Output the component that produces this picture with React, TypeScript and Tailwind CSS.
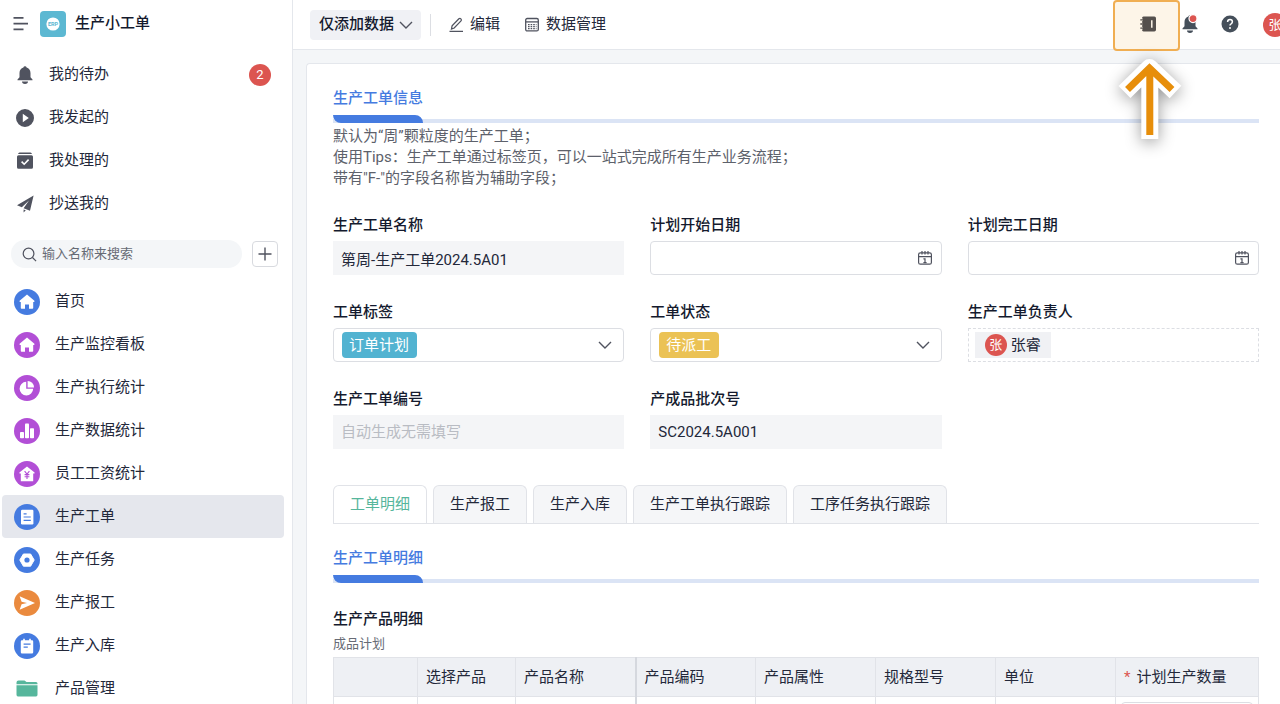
import type { ReactNode } from 'react';

const chevron = (
  <svg viewBox="0 0 16 16" className="h-4 w-4 shrink-0" fill="none" stroke="#50535f" strokeWidth="1.4">
    <path d="M2 5l6 6 6-6" />
  </svg>
);

const house = <path d="M13 5.4 L20.4 11.8 Q20.8 13 19.800 13 H19.200 V19 Q19.200 19.800 18.400 19.800 H15 V15.400 H11 V19.800 H7.600 Q6.800 19.800 6.800 19 V13 H6.200 Q5.200 13 5.600 11.800 Z" />;

const navItems: { label: string; color?: string; icon?: ReactNode; active?: boolean }[] = [
  { label: '首页', color: '#457be0', icon: house },
  { label: '生产监控看板', color: '#b24fd6', icon: house },
  {
    label: '生产执行统计',
    color: '#b24fd6',
    icon: (
      <>
        <path d="M12.2 6.800a6.800 6.800 0 1 0 7 7h-7z" />
        <path d="M13.600 6v6.400h6.400a6.400 6.400 0 0 0-6.400-6.400z" />
      </>
    ),
  },
  {
    label: '生产数据统计',
    color: '#b24fd6',
    icon: (
      <>
        <rect x="6" y="14" width="4" height="6.3" rx=".8" />
        <rect x="11" y="5.5" width="4" height="14.8" rx=".8" />
        <rect x="16" y="10.2" width="4" height="10.1" rx=".8" />
      </>
    ),
  },
  {
    label: '员工工资统计',
    color: '#b24fd6',
    icon: (
      <>
        <path d="M13 5.400 L20.600 11.400 Q20.800 12.600 19.800 12.600 H19.200 V20.200 H6.800 V12.600 H6.200 Q5.200 12.600 5.400 11.400 Z" />
        <path d="M10.6 10.200l2.400 3 2.400-3M13 13.200v4.800M10.600 13.600h4.800M10.600 15.800h4.800" fill="none" stroke="#b24fd6" strokeWidth="1.100" />
      </>
    ),
  },
  {
    label: '生产工单',
    color: '#457be0',
    active: true,
    icon: (
      <>
        <rect x="7" y="5.800" width="12.400" height="14.600" rx="1.200" />
        <path d="M9.600 9.800h3M9.600 13h7.200M9.600 16.400h7.200" stroke="#457be0" strokeWidth="1.200" />
      </>
    ),
  },
  {
    label: '生产任务',
    color: '#457be0',
    icon: (
      <>
        <path d="M9.400 7h7.200L20.200 13l-3.600 6.200H9.400L5.800 13z" stroke="#fff" strokeWidth="1" strokeLinejoin="round" />
        <circle cx="13" cy="13" r="2.600" fill="#457be0" />
      </>
    ),
  },
  {
    label: '生产报工',
    color: '#ea8a3e',
    icon: <path d="M5.600 6.200L21 13 5.600 19.800l2-5.500 5.400-1.300-5.400-1.300z" />,
  },
  {
    label: '生产入库',
    color: '#457be0',
    icon: (
      <>
        <path d="M8 7.200h1.200V5.800h1.600v1.400h4.400V5.800h1.600v1.400H18q1.200 0 1.200 1.200v10.800q0 1.200-1.200 1.200H8q-1.200 0-1.200-1.200V8.400Q6.800 7.200 8 7.200z" />
        <path d="M9.600 11.200h7M9.600 14.200h4.200" stroke="#457be0" strokeWidth="1.200" />
      </>
    ),
  },
  { label: '产品管理' },
];

const bell = <path d="M10 1.200a1.700 1.700 0 0 1 1.600 1.300C14 3.200 15.500 5.300 15.500 8v4.200l2 2.300v.8h-15v-.8l2-2.300V8c0-2.700 1.500-4.800 3.900-5.500A1.700 1.700 0 0 1 10 1.200zM7 16.600h6a3 2.400 0 0 1-6 0z" />;

const todoItems: { label: string; icon: ReactNode; badge?: number }[] = [
  { label: '我的待办', badge: 2, icon: bell },
  {
    label: '我发起的',
    icon: <path fillRule="evenodd" d="M10 1a9 9 0 1 1 0 18 9 9 0 0 1 0-18zM7.800 5.800v8.400l6-4.200z" />,
  },
  {
    label: '我处理的',
    icon: (
      <>
        <path d="M4.500 1.600h11q1 0 1.500 1.500H3Q3.500 1.600 4.500 1.600zM3.500 4.300h13q1.500 0 1.500 1.500v10.400q0 1.500-1.500 1.500h-13Q2 17.700 2 16.200V5.800q0-1.500 1.500-1.500z" />
        <path d="M6.600 10.600l2.600 2.600 4.400-4.600" fill="none" stroke="#fff" strokeWidth="1.600" />
      </>
    ),
  },
  {
    label: '抄送我的',
    icon: <path d="M18.600 1.600L2 11.200l4.800 2L14 6.600l-5.400 7.600 6.400 2.600zM8.600 15.400v3.200l2.200-2.300z" />,
  },
];

const tabs = ['工单明细', '生产报工', '生产入库', '生产工单执行跟踪', '工序任务执行跟踪'];

const columns = ['', '选择产品', '产品名称', '产品编码', '产品属性', '规格型号', '单位', '计划生产数量'];

function SectionTitle({ children }: { children: ReactNode }) {
  return (
    <div className="border-b-4 border-[#dbe4f5]">
      <h2 className="-mb-1 inline-block align-top text-[15px] leading-6 font-medium text-[#457be0]">
        {children}
        <span className="mt-[5px] block h-2 rounded-tr-lg rounded-bl-lg bg-[#457be0]" />
      </h2>
    </div>
  );
}

function Field({ id, label, children }: { id: string; label: string; children: ReactNode }) {
  return (
    <div>
      <label htmlFor={id} className="mb-1 block leading-6 font-medium text-[#141a2e]">
        {label}
      </label>
      {children}
    </div>
  );
}

function DateInput({ id }: { id: string }) {
  return (
    <div className="flex h-[34px] items-center rounded border border-[#dcdee3] pr-2">
      <input id={id} type="text" className="min-w-0 flex-1 px-2 outline-none" />
      <svg viewBox="0 0 16 16" className="h-4 w-4" fill="none" stroke="#50535f" strokeWidth="1.200">
        <rect x="1.600" y="2.800" width="12.800" height="11.400" rx="1.800" />
        <path d="M1.600 6.700h12.800M5 1v3.600M8 1v3.600M11 1v3.600M6.400 8.800H8v4M6.400 12.600h3.200" />
      </svg>
    </div>
  );
}

function Sidebar() {
  return (
    <aside className="w-[293px] shrink-0 overflow-hidden border-r border-[#e4e7ec] bg-white">
      <div className="flex h-[47px] items-center pl-3">
        <button type="button" aria-label="菜单" className="mr-3">
          <svg viewBox="0 0 16 16" className="h-4 w-4" fill="none" stroke="#50535f" strokeWidth="1.700">
            <path d="M1.500 1.800h10M1.500 7.600h14.500M1.500 13.400h10" />
          </svg>
        </button>
        <svg viewBox="0 0 26 26" className="mr-[9px] h-[26px] w-[26px] rounded bg-[#5cb8d2]">
          <circle cx="13" cy="13" r="6.600" fill="#fff" />
          <text x="13" y="15" textAnchor="middle" fontSize="5.500" fontWeight="700" fill="#5cb8d2">ERP</text>
        </svg>
        <h1 className="font-medium text-[#141a2e]">生产小工单</h1>
      </div>

      <ul className="pt-1.5">
        {todoItems.map((item) => (
          <li key={item.label}>
            <a href="#" className="flex h-[43px] items-center pr-[21px] pl-[15px]">
              <svg viewBox="0 0 20 20" className="mr-3.5 h-5 w-5" fill="#50535f">{item.icon}</svg>
              {item.label}
              {item.badge && (
                <span className="ml-auto flex h-[22px] w-[22px] items-center justify-center rounded-full bg-[#dc5550] text-[13px] text-white">
                  {item.badge}
                </span>
              )}
            </a>
          </li>
        ))}
      </ul>

      <div className="flex items-center justify-between pt-[15px] pr-3.5 pb-3 pl-[11px]">
        <label className="flex h-7 w-[231px] items-center rounded-full bg-[#f4f6f8] px-[11px]">
          <svg viewBox="0 0 16 16" className="mr-[5px] h-[15px] w-[15px]" fill="none" stroke="#50535f" strokeWidth="1.300">
            <circle cx="7" cy="7" r="5.700" />
            <path d="M11.200 11.200L15 15" />
          </svg>
          <input type="search" placeholder="输入名称来搜索" className="min-w-0 flex-1 text-[13px] outline-none placeholder:text-[#676b75]" />
        </label>
        <button type="button" aria-label="新建" className="flex h-[26px] w-[26px] items-center justify-center rounded border border-[#d8dadf]">
          <svg viewBox="0 0 14 14" className="h-3.5 w-3.5" stroke="#50535f" strokeWidth="1.400">
            <path d="M7 .5v13M.5 7h13" />
          </svg>
        </button>
      </div>

      <nav className="pr-2 pl-0.5">
        {navItems.map((item) => (
          <a
            key={item.label}
            href="#"
            className={`flex h-[43px] items-center gap-[15px] rounded pl-3 ${item.active ? 'bg-[#e5e7ed]' : ''}`}
          >
            {item.icon ? (
              <svg viewBox="0 0 26 26" className="h-[26px] w-[26px]" fill="#fff">
                <circle cx="13" cy="13" r="13" fill={item.color} />
                {item.icon}
              </svg>
            ) : (
              <svg viewBox="0 0 26 26" className="h-[26px] w-[26px]" fill="#56b69c">
                <path d="M4.500 4.500h6l2 1.500H22q1.500 0 1.500 1.500v.8h-21V6.500q0-2 2-2zM2.500 9.300h21v9.400q0 1.800-1.500 1.800H4q-1.500 0-1.500-1.800z" />
              </svg>
            )}
            {item.label}
          </a>
        ))}
      </nav>
    </aside>
  );
}

function Header() {
  return (
    <header className="flex h-[50px] shrink-0 items-center border-b border-[#e4e7ec] bg-white pl-[17px]">
      <div className="flex h-[30px] items-center rounded bg-[#f0f1f5] pr-[7px] pl-[9px]">
        <select aria-label="提交权限" className="mr-[3px] appearance-none font-medium text-[#141a2e] outline-none">
          <option>仅添加数据</option>
        </select>
        {chevron}
      </div>
      <span className="mx-[9px] h-[22px] w-px bg-[#dcdee3]" />
      <button type="button" className="ml-2 flex items-center gap-1.5">
        <svg viewBox="0 0 16 16" className="h-4 w-4" fill="none" stroke="#50535f" strokeWidth="1.300">
          <path d="M3.500 12l.6-3.300 6.800-6.900q1-.9 2 .1t.1 2L6.200 11zM1.500 14.300h13.500" />
        </svg>
        编辑
      </button>
      <button type="button" className="ml-6 flex items-center gap-1.5">
        <svg viewBox="0 0 16 16" className="h-4 w-4" fill="none" stroke="#50535f" strokeWidth="1.300">
          <rect x="1.700" y="1.500" width="12.600" height="12.400" rx="1.500" />
          <path d="M1.700 4.900h12.600" />
          <path d="M4 7.600h8.500M4 9.600h8.500M4 11.600h8.500" strokeDasharray="1.600 1" />
        </svg>
        数据管理
      </button>

      <div className="-mr-[7px] ml-auto flex h-full items-center">
        <div className="relative z-10 flex h-[51px] w-[67px] items-center justify-center self-start rounded-sm border-2 border-[#f0ae52] bg-[#fdf5e8]">
          <button type="button" aria-label="通讯录" className="pb-1">
            <svg viewBox="0 0 18 18" className="ml-0.5 h-[18px] w-[18px]" fill="#55504d">
              <path d="M4.500 1.500h10.800q1.700 0 1.700 1.700v11.600q0 1.700-1.700 1.700H4.500Q3 16.500 3 14.800V3.200Q3 1.500 4.500 1.500z" />
              <path d="M1.400 4.900h2.400M1.400 9h2.400M1.400 13.100h2.400" stroke="#fdf5e8" strokeWidth="2.600" />
              <path d="M1.300 4.900h3.200M1.300 9h3.200M1.300 13.100h3.200" stroke="#55504d" strokeWidth="1.400" />
              <path d="M12.800 5.200v7.600" stroke="#fdf5e8" strokeWidth="1.500" />
            </svg>
          </button>
          <svg
            viewBox="0 0 80 100"
            className="absolute top-full -left-[5px] h-[100px] w-20 drop-shadow-[0_3px_8px_rgba(0,0,0,0.4)]"
            fill="none"
          >
            <path d="M14.500 43L39.500 18.500 65.500 43M39.800 19V90" stroke="#fff" strokeWidth="17" strokeLinejoin="round" />
            <path d="M17.500 40.500L39.500 19 62 40.500M39.800 19V86" stroke="#e78e0a" strokeWidth="7" />
          </svg>
        </div>
        <button type="button" aria-label="通知" className="pb-0.5">
          <svg viewBox="0 0 20 20" className="h-5 w-5" fill="#454f5a">
            {bell}
            <circle cx="13" cy="4.600" r="4" fill="#dc5550" stroke="#fff" strokeWidth="1.200" />
          </svg>
        </button>
        <button type="button" aria-label="帮助" className="mr-[23px] ml-5 pb-0.5">
          <svg viewBox="0 0 20 20" className="h-5 w-5">
            <circle cx="10" cy="10" r="8.500" fill="#454f5a" />
            <path d="M7.600 8q0-2.500 2.400-2.500t2.400 2.300q0 1.200-1.300 2-1.100.6-1.100 1.700" fill="none" stroke="#fff" strokeWidth="1.500" />
            <circle cx="10" cy="13.900" r="1" fill="#fff" />
          </svg>
        </button>
        <button type="button" className="h-6 w-6 rounded-full bg-[#dc5550] text-[13px] leading-6 text-white">张</button>
      </div>
    </header>
  );
}

export default function App() {
  return (
    <div className="flex h-screen overflow-hidden font-['Roboto','Noto_Sans_CJK_SC',sans-serif] text-[15px] text-[#23283a]">
      <Sidebar />

      <div className="flex min-w-0 flex-1 flex-col">
        <Header />

        <main className="flex-1 overflow-hidden bg-[#f4f6f8] pt-[13px] pl-[13px]">
          <div className="min-h-full rounded-tl border-t border-l border-[#e4e7ec] bg-white pt-[22px] pr-[21px] pl-[26px]">
            <SectionTitle>生产工单信息</SectionTitle>
            <p className="pt-[3px] leading-[21px] text-[#5d616b]">
              默认为“周”颗粒度的生产工单；
              <br />
              使用Tips：生产工单通过标签页，可以一站式完成所有生产业务流程；
              <br />
              带有"F-"的字段名称皆为辅助字段；
            </p>

            <form className="mt-6 grid grid-cols-3 gap-x-[26px] gap-y-[25px]">
              <Field id="name" label="生产工单名称">
                <input id="name" readOnly value="第周-生产工单2024.5A01" className="h-[34px] w-full bg-[#f4f5f7] px-2 outline-none" />
              </Field>
              <Field id="start" label="计划开始日期">
                <DateInput id="start" />
              </Field>
              <Field id="end" label="计划完工日期">
                <DateInput id="end" />
              </Field>
              <Field id="tag" label="工单标签">
                <div className="flex h-[34px] items-center justify-between rounded border border-[#dcdee3] pr-2.5 pl-2">
                  <select id="tag" className="h-[26px] appearance-none rounded bg-[#52b3d1] px-[7px] text-white outline-none">
                    <option>订单计划</option>
                  </select>
                  {chevron}
                </div>
              </Field>
              <Field id="status" label="工单状态">
                <div className="flex h-[34px] items-center justify-between rounded border border-[#dcdee3] pr-2.5 pl-2">
                  <select id="status" className="h-[26px] appearance-none rounded bg-[#ebc255] px-[7px] text-white outline-none">
                    <option>待派工</option>
                  </select>
                  {chevron}
                </div>
              </Field>
              <Field id="owner" label="生产工单负责人">
                <div className="flex h-[34px] items-center border border-dashed border-[#dcdee3] pl-1.5">
                  <button id="owner" type="button" className="flex h-[26px] items-center gap-1 bg-[#f0f1f4] px-2.5">
                    <span className="h-[22px] w-[22px] rounded-full bg-[#dc5550] text-[13px] leading-[22px] text-white">张</span>
                    张睿
                  </button>
                </div>
              </Field>
              <Field id="code" label="生产工单编号">
                <input id="code" readOnly placeholder="自动生成无需填写" className="h-[34px] w-full bg-[#f4f5f7] px-2 outline-none placeholder:text-[#b9bcc3]" />
              </Field>
              <Field id="batch" label="产成品批次号">
                <input id="batch" readOnly value="SC2024.5A001" className="h-[34px] w-full bg-[#f4f5f7] px-2 outline-none" />
              </Field>
            </form>

            <div role="tablist" className="mt-9 flex gap-1.5 border-b border-[#e1e3e8]">
              {tabs.map((tab, i) => (
                <button
                  key={tab}
                  type="button"
                  role="tab"
                  aria-selected={i === 0}
                  className={`h-[38px] rounded-t-md border border-b-0 border-[#e1e3e8] px-4 ${
                    i === 0 ? '-mb-px bg-white text-[#56b69c]' : 'bg-[#f5f6f8]'
                  }`}
                >
                  {tab}
                </button>
              ))}
            </div>

            <div className="mt-[22px]">
              <SectionTitle>生产工单明细</SectionTitle>
            </div>

            <h3 className="mt-6 leading-6 font-medium text-[#141a2e]">生产产品明细</h3>
            <p className="text-[13px] leading-[26px] text-[#676b75]">成品计划</p>
            <table className="w-full table-fixed border-collapse">
              <colgroup>
                <col className="w-[84px]" />
                <col className="w-[98px]" />
                <col className="w-[120px]" />
                <col className="w-[120px]" />
                <col className="w-[120px]" />
                <col className="w-[120px]" />
                <col className="w-[120px]" />
                <col />
              </colgroup>
              <thead>
                <tr className="h-[39px] bg-[#eef0f4] text-left">
                  {columns.map((column, i) => (
                    <th
                      key={i}
                      className={`border border-[#e1e3e8] px-2 font-normal ${i === 2 ? 'border-r-2 border-r-[#d5d8de]' : ''}`}
                    >
                      {i === 7 && <span className="mr-1.5 text-[#dc5550]">*</span>}
                      {column}
                    </th>
                  ))}
                </tr>
              </thead>
              <tbody>
                <tr className="h-11">
                  {columns.map((column, i) => (
                    <td
                      key={i}
                      className={`border border-[#e1e3e8] p-[5px] ${i === 2 ? 'border-r-2 border-r-[#d5d8de]' : ''}`}
                    >
                      {i === 7 && <input aria-label={column} className="block h-[34px] w-full rounded border border-[#dcdee3]" />}
                    </td>
                  ))}
                </tr>
              </tbody>
            </table>
          </div>
        </main>
      </div>
    </div>
  );
}
